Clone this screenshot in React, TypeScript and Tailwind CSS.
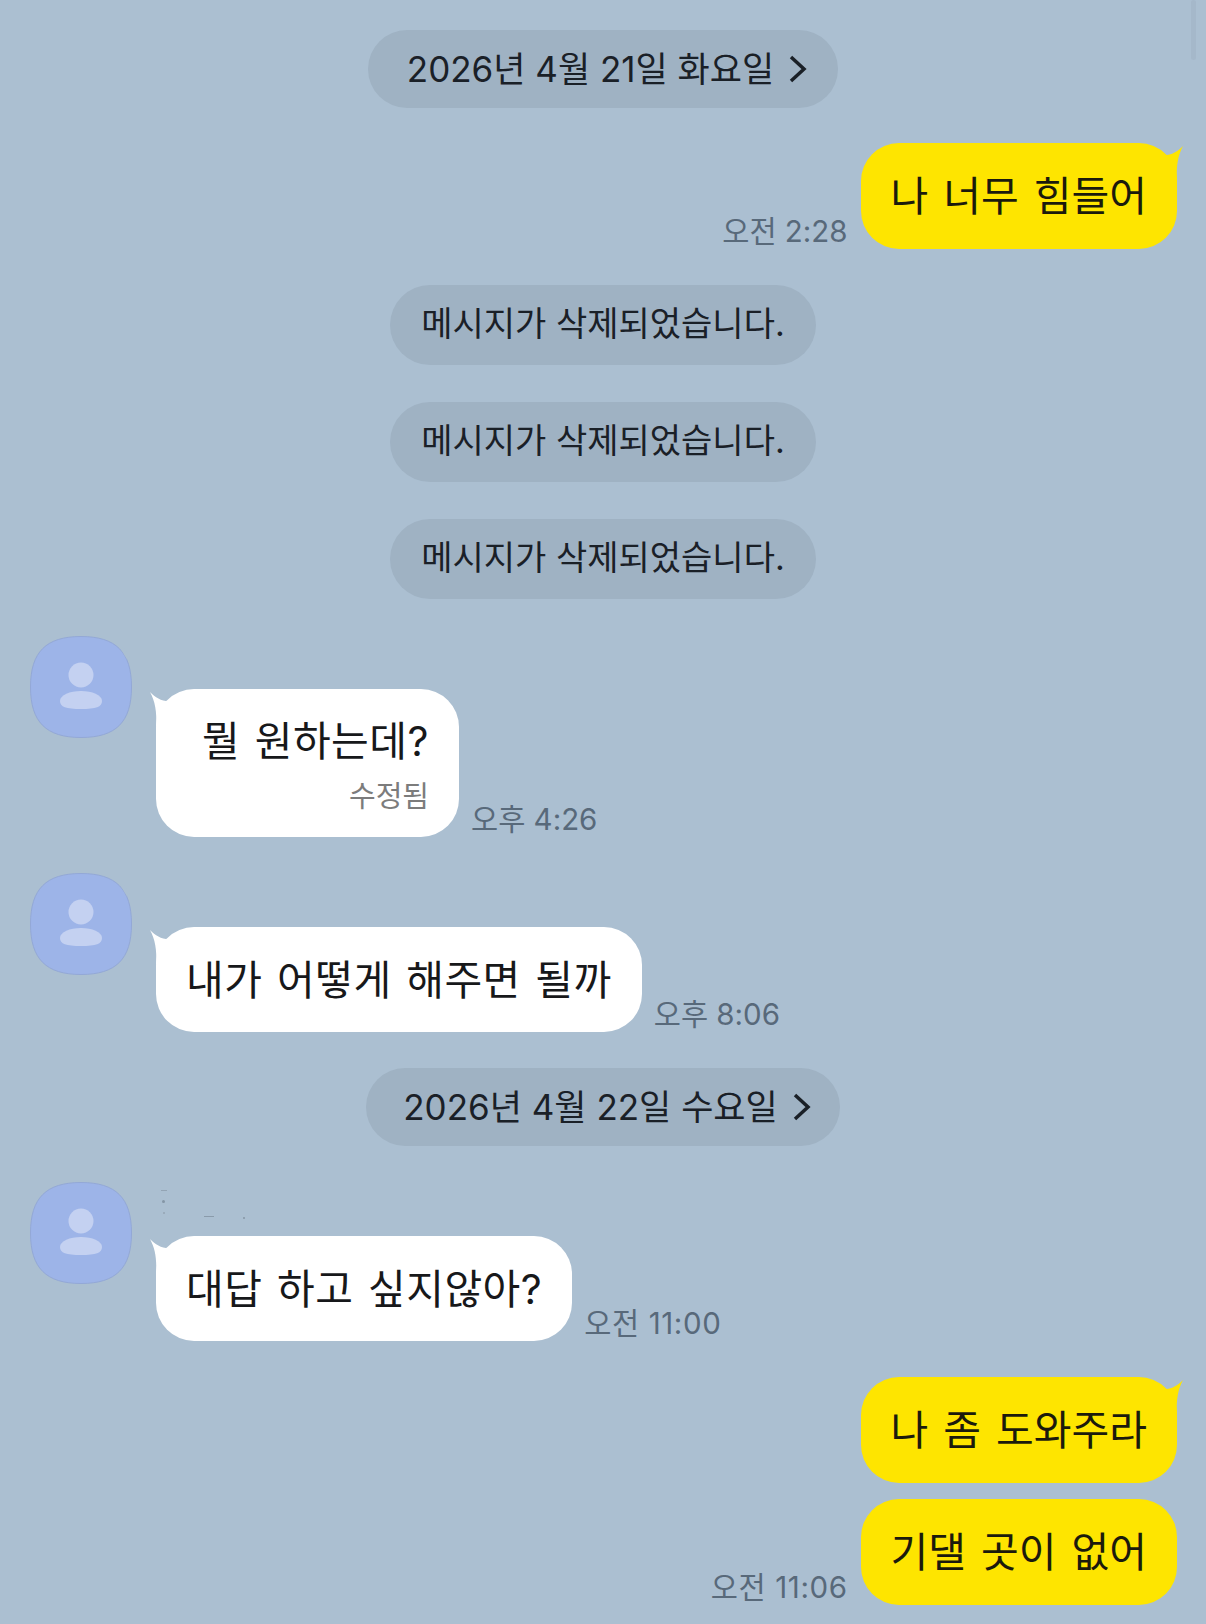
import React from "react";

const font = "[font-family:'Inter','Noto_Sans_CJK_KR',sans-serif]";

const YellowTail = () => (
  <svg className="absolute right-[-6px] top-[3px]" width="26" height="34" viewBox="0 0 26 34">
    <path d="M26 0C20 6 14 10 4 9L4 34L20 34C19 20 21 9 26 0Z" fill="#fee500" />
  </svg>
);

const WhiteTail = () => (
  <svg className="absolute left-[-6px] top-[3px]" width="26" height="34" viewBox="0 0 26 34">
    <path d="M0 0C6 6 12 10 22 9L22 34L6 34C7 20 5 9 0 0Z" fill="#ffffff" />
  </svg>
);

const Avatar = ({ nick }: { nick?: boolean }) => (
  <svg width="102" height="102" viewBox="0 0 102 102" className="shrink-0">
    <path
      d="M51 .5C86 .5 101.5 16 101.5 51S86 101.5 51 101.5 .5 86 .5 51 16 .5 51 .5Z"
      fill="#9db4e8"
      stroke="#93a8d6"
    />
    <circle cx="51" cy="39" r="12.500" fill="#c4d1f1" />
    <path d="M30 65C30 59 40 55 51 55S72 59 72 65C72 71 66 73 51 73S30 71 30 65Z" fill="#c4d1f1" />
    {nick && <path d="M92 12L98 22" stroke="#abbfd1" strokeWidth="3" />}
  </svg>
);

const DatePill = ({ text, width }: { text: string; width: string }) => (
  <div className={`mx-auto flex h-[78px] items-center justify-center gap-[15px] rounded-[39px] bg-[#9fb2c3] pl-[8px] text-[35px] text-[#1a2027] ${width}`}>
    <span>{text}</span>
    <svg width="18" height="28" viewBox="0 0 18 28" fill="none">
      <path d="M2 2L15 14L2 26" stroke="#1a2027" strokeWidth="3.500" />
    </svg>
  </div>
);

const Deleted = ({ className }: { className: string }) => (
  <div className={`mx-auto flex h-[80px] w-[426px] items-center justify-center rounded-[40px] bg-[#9fb2c3] pb-[3px] text-[34px] text-[#1a2027] ${className}`}>
    메시지가 삭제되었습니다.
  </div>
);

// the 1s in 11:xx sit wider in the original, so those two get a little tracking
const Time = ({ text, wide }: { text: string; wide?: boolean }) => (
  <span className={`-mb-[2px] text-[29.500px] leading-[40px] text-[#58697a] ${wide ? "tracking-[0.600px]" : ""}`}>{text}</span>
);

const Mine = ({ text, time, tail, wide, className }: { text: string; time?: string; tail?: boolean; wide?: boolean; className: string }) => (
  <div className={`flex items-end justify-end gap-[13px] pr-[29px] ${className}`}>
    {time && <Time text={time} wide={wide} />}
    <div className="relative flex h-[106px] items-center rounded-[38px] bg-[#fee500] px-[30px] pt-[1px] text-[41px] text-[#1b1a0c] [word-spacing:3.500px]">
      {tail && <YellowTail />}
      <span className="relative">{text}</span>
    </div>
  </div>
);

const Theirs = ({ text, time, edited, specks, nick, className }: { text: string; time: string; edited?: boolean; specks?: boolean; nick?: boolean; className: string }) => (
  <div className={`relative flex gap-[24px] pl-[30px] ${className}`}>
    <Avatar nick={nick} />
    {specks && (
      <>
        <div className="absolute left-[161px] top-[8px] h-[1px] w-[6px] bg-[#93a4b4]" />
        <div className="absolute left-[162px] top-[18px] h-[3px] w-[3px] rounded-full bg-[#8496a6]" />
        <div className="absolute left-[163px] top-[30px] h-[2px] w-[2px] bg-[#9aabbb]" />
        <div className="absolute left-[204px] top-[34px] h-[1px] w-[10px] bg-[#8a9bab]" />
        <div className="absolute left-[243px] top-[35px] h-[2px] w-[2px] bg-[#8fa0b0]" />
      </>
    )}
    <div className={`flex items-end gap-[12px] ${edited ? "mt-[53px]" : "mt-[54px]"}`}>
      <div className={`relative rounded-[38px] bg-white text-[41px] tracking-[0.500px] text-[#17181a] [word-spacing:2.500px] ${edited ? "flex h-[148px] w-[303px] flex-col items-end pr-[30px] pt-[22px]" : "flex h-[105px] items-center px-[30px]"}`}>
        <WhiteTail />
        <span className="relative leading-[60px]">{text}</span>
        {edited && <span className="relative mt-[8px] text-[29px] leading-[36px] tracking-normal text-[#7c7c7c]">수정됨</span>}
      </div>
      <Time text={time} wide={specks} />
    </div>
  </div>
);

export default function App() {
  return (
    <div className={`relative flex h-[1624px] w-[1206px] flex-col overflow-hidden bg-[#abbfd1] pt-[30px] ${font}`}>
      <div className="absolute right-[10px] top-0 h-[60px] w-[5px] rounded-full bg-[#a5b8ca]" />
      <DatePill text="2026년 4월 21일 화요일" width="w-[470px]" />
      <Mine text="나 너무 힘들어" time="오전 2:28" tail className="mt-[35px]" />
      <Deleted className="mt-[36px]" />
      <Deleted className="mt-[37px]" />
      <Deleted className="mt-[37px]" />
      <Theirs text="뭘 원하는데?" time="오후 4:26" edited nick className="mt-[37px]" />
      <Theirs text="내가 어떻게 해주면 될까" time="오후 8:06" nick className="mt-[36px]" />
      <div className="mt-[36px]">
        <DatePill text="2026년 4월 22일 수요일" width="w-[474px]" />
      </div>
      <Theirs text="대답 하고 싶지않아?" time="오전 11:00" specks className="mt-[36px]" />
      <Mine text="나 좀 도와주라" tail className="mt-[36px]" />
      <Mine text="기댈 곳이 없어" time="오전 11:06" wide className="mt-[16px]" />
    </div>
  );
}
